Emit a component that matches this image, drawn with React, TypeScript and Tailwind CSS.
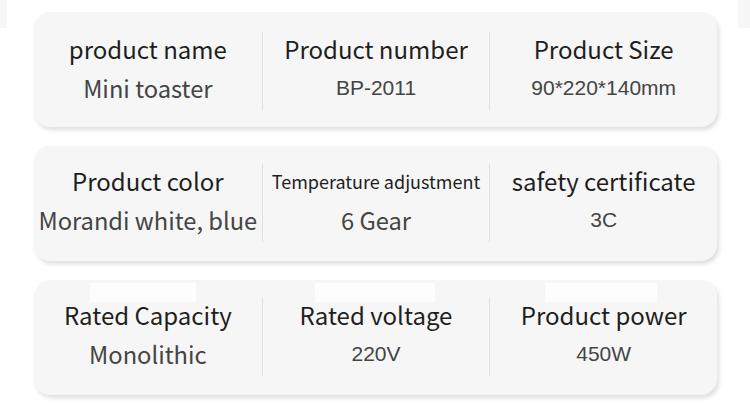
import React from "react";

type Cell = { label: string; value: string; labelSmall?: boolean; valueArial?: boolean };

const rows: Cell[][] = [
  [
    { label: "product name", value: "Mini toaster" },
    { label: "Product number", value: "BP-2011", valueArial: true },
    { label: "Product Size", value: "90*220*140mm", valueArial: true },
  ],
  [
    { label: "Product color", value: "Morandi white, blue" },
    { label: "Temperature adjustment", value: "6 Gear", labelSmall: true },
    { label: "safety certificate", value: "3C", valueArial: true },
  ],
  [
    { label: "Rated Capacity", value: "Monolithic" },
    { label: "Rated voltage", value: "220V", valueArial: true },
    { label: "Product power", value: "450W", valueArial: true },
  ],
];

export default function App() {
  return (
    <div
      className="relative w-[750px] h-[405px] bg-white overflow-hidden"
      style={{ fontFamily: '"Noto Sans CJK SC", "Noto Sans", sans-serif' }}
    >
      <div className="absolute left-0 top-0 w-[7px] h-[28px] bg-[#f7f7f7]" />
      <div className="absolute right-0 top-0 w-[12px] h-[28px] bg-[#f7f7f7]" />
      <div className="flex flex-col gap-[19px] pt-[12px] pl-[34px]">
        {rows.map((row, i) => (
          <div
            key={i}
            className={`relative w-[683px] h-[115px] rounded-[16px] bg-[#f6f6f6] shadow-[2px_3px_4px_rgba(0,0,0,0.13)] grid grid-cols-3 ${i === 0 ? "pt-[20px] pb-[20px]" : "pt-[18px] pb-[22px]"}`}
          >
            {i === 2 && (
              <>
                <div className="absolute left-[56px] top-[3px] w-[106px] h-[19px] bg-[#fdfdfd]" />
                <div className="absolute left-[281px] top-[3px] w-[120px] h-[19px] bg-[#fdfdfd]" />
                <div className="absolute left-[511px] top-[3px] w-[112px] h-[19px] bg-[#fdfdfd]" />
              </>
            )}
            {row.map((c, j) => (
              <div
                key={j}
                className={`relative flex flex-col items-center ${j > 0 ? "border-l border-[#e2e2e2]" : ""}`}
              >
                <div
                  className={`${c.labelSmall ? "text-[18px]" : "text-[24px]"} leading-[34px] text-[#1e1e1e] whitespace-nowrap`}
                >
                  {c.label}
                </div>
                <div
                  className={`${c.valueArial ? "text-[21px]" : "text-[23.7px]"} leading-[44px] text-[#444444] whitespace-nowrap`}
                  style={c.valueArial ? { fontFamily: '"Liberation Sans", Arial, sans-serif' } : undefined}
                >
                  {c.value}
                </div>
              </div>
            ))}
          </div>
        ))}
      </div>
    </div>
  );
}
